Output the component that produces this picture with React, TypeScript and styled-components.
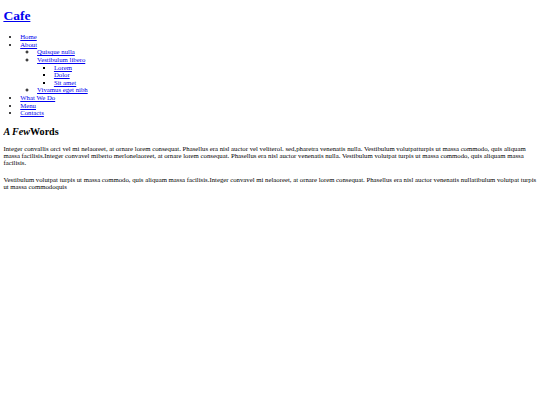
import styled, { createGlobalStyle } from 'styled-components'

const GlobalStyle = createGlobalStyle`
  html {
    background: #fff;
  }

  body {
    margin: 3.4px;
    font-family: "Liberation Serif", "Times New Roman", serif;
    font-size: 6.75px;
    color: #000;
  }
`

const Header = styled.header``

const Logo = styled.h1`
  font-size: 13.5px;
  line-height: 15.5px;
  font-weight: bold;
  margin: 4.3px 0 9.7px;

  a {
    color: #0000ee;
  }
`

const Menu = styled.ul<{ $marker: string }>`
  margin: 0;
  padding-left: 16.85px;
  list-style-type: ${(p) => p.$marker};
  line-height: 7.65px;

  a {
    color: #0000ee;
    text-decoration: underline;
  }
`

const Section = styled.section`
  margin-top: 9px;
`

const Heading = styled.h2`
  font-size: 10.1px;
  line-height: 11.6px;
  font-weight: bold;
  margin: 0 0 7.3px;
`

const Text = styled.p<{ $gap?: number }>`
  line-height: 7px;
  margin: ${(p) => p.$gap ?? 0}px 0 0;
`

export default function App() {
  return (
    <>
      <GlobalStyle />
      <Header>
        <Logo>
          <a href="#">Cafe</a>
        </Logo>
        <nav>
          <Menu $marker="disc">
            <li><a href="#">Home</a></li>
            <li>
              <a href="#">About</a>
              <Menu $marker="circle">
                <li><a href="#">Quisque nulla</a></li>
                <li>
                  <a href="#">Vestibulum libero</a>
                  <Menu $marker="square">
                    <li><a href="#">Lorem</a></li>
                    <li><a href="#">Dolor</a></li>
                    <li><a href="#">Sit amet</a></li>
                  </Menu>
                </li>
                <li><a href="#">Vivamus eget nibh</a></li>
              </Menu>
            </li>
            <li><a href="#">What We Do</a></li>
            <li><a href="#">Menu</a></li>
            <li><a href="#">Contacts</a></li>
          </Menu>
        </nav>
      </Header>
      <Section>
        <Heading>
          <em>A Few</em>Words
        </Heading>
        <Text>
          Integer convallis orci vel mi nelaoreet, at ornare lorem consequat. Phasellus era nisl auctor vel
          veliterol. sed,pharetra venenatis nulla. Vestibulum volutpatturpis ut massa commodo, quis aliquam massa
          facilisis.Integer convavel miberto merlonelaoreet, at ornare lorem consequat. Phasellus era nisl auctor
          venenatis nulla. Vestibulum volutpat turpis ut massa commodo, quis aliquam massa facilisis.
        </Text>
        <Text $gap={9.8}>
          Vestibulum volutpat turpis ut massa commodo, quis aliquam massa facilisis.Integer convavel mi nelaoreet, at
          ornare lorem consequat. Phasellus era nisl auctor venenatis nullatibulum volutpat turpis ut massa
          commodoquis
        </Text>
      </Section>
    </>
  )
}
